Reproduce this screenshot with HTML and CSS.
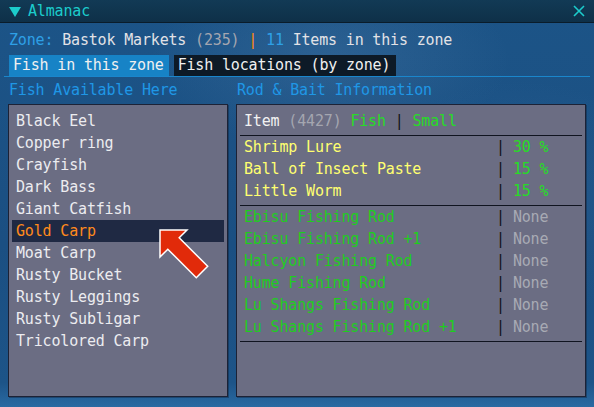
FILE: index.html
```html
<!DOCTYPE html>
<html>
<head>
<meta charset="utf-8">
<link rel="stylesheet" href="styles.css">
</head>
<body>
<div class="window">
  <div class="titlebar">
    <svg class="tri" width="12" height="10" viewBox="0 0 12 10"><polygon points="0,0 12,0 6,10" fill="#1ccccc"/></svg>
    <span class="title">Almanac</span>
    <svg class="close" width="12" height="12" viewBox="0 0 12 12"><path d="M1 1 L11 11 M11 1 L1 11" stroke="#1ccccc" stroke-width="1.6"/></svg>
  </div>
  <div class="body">
    <div class="zone"><span class="blue">Zone:</span> Bastok Markets <span class="gray">(235)</span> <span class="orange">|</span> <span class="blue">11</span> Items in this zone</div>
    <div class="tabs">
      <div class="tab active">Fish in this zone</div>
      <div class="tab">Fish locations (by zone)</div>
    </div>
    <div class="heads">
      <div class="head left-head">Fish Available Here</div>
      <div class="head">Rod &amp; Bait Information</div>
    </div>
    <div class="panels">
      <div class="panel list">
        <div class="row">Black Eel</div>
        <div class="row">Copper ring</div>
        <div class="row">Crayfish</div>
        <div class="row">Dark Bass</div>
        <div class="row">Giant Catfish</div>
        <div class="row sel">Gold Carp</div>
        <div class="row">Moat Carp</div>
        <div class="row">Rusty Bucket</div>
        <div class="row">Rusty Leggings</div>
        <div class="row">Rusty Subligar</div>
        <div class="row">Tricolored Carp</div>
      </div>
      <div class="panel info">
        <div class="irow item"><span class="white">Item</span>&nbsp;<span class="gray">(4427)</span>&nbsp;<span class="green">Fish</span>&nbsp;<span class="bar">|</span>&nbsp;<span class="green">Small</span></div>
        <div class="sep"></div>
        <div class="irow"><span class="name yellow">Shrimp Lure</span><span class="bar">|</span><span class="val green">30 %</span></div>
        <div class="irow"><span class="name yellow">Ball of Insect Paste</span><span class="bar">|</span><span class="val green">15 %</span></div>
        <div class="irow"><span class="name yellow">Little Worm</span><span class="bar">|</span><span class="val green">15 %</span></div>
        <div class="sep"></div>
        <div class="irow"><span class="name rod">Ebisu Fishing Rod</span><span class="bar">|</span><span class="val none">None</span></div>
        <div class="irow"><span class="name rod">Ebisu Fishing Rod +1</span><span class="bar">|</span><span class="val none">None</span></div>
        <div class="irow"><span class="name rod">Halcyon Fishing Rod</span><span class="bar">|</span><span class="val none">None</span></div>
        <div class="irow"><span class="name rod">Hume Fishing Rod</span><span class="bar">|</span><span class="val none">None</span></div>
        <div class="irow"><span class="name rod">Lu Shangs Fishing Rod</span><span class="bar">|</span><span class="val none">None</span></div>
        <div class="irow"><span class="name rod">Lu Shangs Fishing Rod +1</span><span class="bar">|</span><span class="val none">None</span></div>
        <div class="sep"></div>
      </div>
    </div>
    <svg class="arrow" width="70" height="70" viewBox="150 220 70 70">
      <polygon points="160,230 187,230 179.2,237.8 207.7,266.3 196.3,277.7 167.8,249.2 160,257" fill="#e12a0a" stroke="#ffffff" stroke-width="1.5" stroke-linejoin="miter"/>
    </svg>
  </div>
</div>
</body>
</html>
```

FILE: styles.css
```css
* { box-sizing: border-box; }
html, body { margin: 0; padding: 0; }
body {
  width: 594px;
  height: 407px;
  overflow: hidden;
  font-family: "DejaVu Sans Mono", "Liberation Mono", monospace;
  font-size: 15px;
  letter-spacing: -0.17px;
  color: #e2e2e6;
}
.window {
  width: 594px;
  height: 407px;
  display: flex;
  flex-direction: column;
  background:
    radial-gradient(ellipse 180px 90px at 330px 60px, rgba(120,160,200,0.18), transparent),
    radial-gradient(ellipse 160px 120px at 520px 200px, rgba(90,140,190,0.15), transparent),
    linear-gradient(180deg, #1c5487 0%, #1b4f82 60%, #1d5488 94%, #2a6aa2 100%);
}
.titlebar {
  height: 23px;
  flex: none;
  display: flex;
  align-items: center;
  padding: 0 0 0 9px;
  background: linear-gradient(180deg, #123a55, #0e3048);
  border-bottom: 1px solid #0a1c2a;
}
.tri { flex: none; margin-top: 1px; }
.title {
  color: #1ccccc;
  margin-left: 7px;
  line-height: 22px;
}
.close { margin-left: auto; margin-right: 9px; }
.body {
  position: relative;
  flex: 1;
  display: flex;
  flex-direction: column;
}
.zone {
  line-height: 22px;
  margin: 6px 0 0 9px;
  white-space: pre;
}
.blue { color: #2ea0e6; }
.gray { color: #a4a6b0; }
.orange { color: #ff8a12; }
.white { color: #f2f2f2; }
.green { color: #26dc26; }
.yellow { color: #ffff70; }
.tabs {
  display: flex;
  gap: 5px;
  margin: 4px 4px 0 4px;
  padding-left: 5px;
  border-bottom: 1px solid #1a86cc;
}
.tab {
  height: 21px;
  line-height: 21px;
  padding: 0 6px 0 4px;
  background: #0d1a27;
  color: #f0f0f0;
  white-space: pre;
}
.tab.active { background: #1783c6; padding-right: 5px; }
.heads {
  display: flex;
  margin-top: 3px;
  line-height: 20px;
  color: #1f97e6;
}
.head { white-space: pre; }
.left-head { width: 237px; padding-left: 9px; }
.panels {
  display: flex;
  gap: 8px;
  margin: 4px 0 0 8px;
}
.panel {
  height: 293px;
  background: #6b6d83;
  border: 1px solid #1c2236;
  box-shadow: 1px 1px 0 rgba(10,20,40,0.35);
}
.list {
  width: 220px;
  padding: 5px 3px;
}
.row {
  height: 22px;
  line-height: 22px;
  padding-left: 4px;
  color: #ececf0;
  white-space: pre;
}
.row.sel {
  background: #1f2943;
  color: #ff8a1c;
}
.info {
  width: 350px;
  padding: 5px 3px;
}
.irow {
  display: flex;
  height: 22px;
  line-height: 22px;
  padding-left: 4px;
  white-space: pre;
}
.irow.item { margin-bottom: 3px; }
.sep {
  height: 1px;
  background: #101420;
}
.irow + .sep { margin-top: 3px; }
.name { width: 252px; }
.bar { color: #111318; }
.val { margin-left: 8px; }
.rod { color: #1fcc1f; }
.none { color: #a8aab4; }
.arrow {
  position: absolute;
  left: 150px;
  top: 197px;
}
```
